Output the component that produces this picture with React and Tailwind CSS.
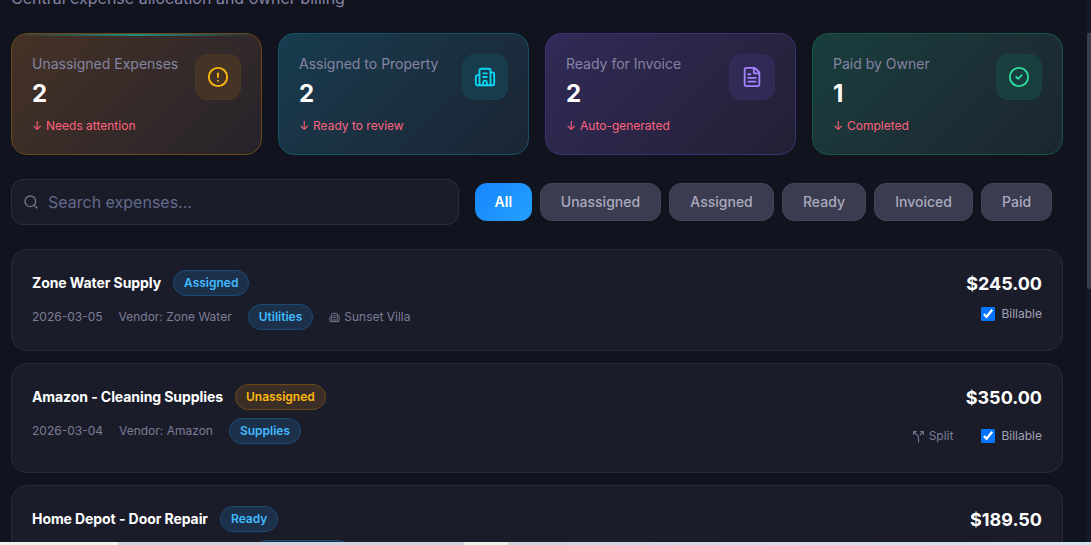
import { useState } from "react";
import { Building2, CircleAlert, CircleCheck, FileText, Search, Split } from "lucide-react";

const STATS = [
  {
    label: "Unassigned Expenses",
    value: 2,
    note: "Needs attention",
    icon: CircleAlert,
    card: "border-[#694819] from-[#453225] to-[#27232b]",
    box: "bg-[#453425] border-[#483727] text-[#ffb90c]",
    highlight: true,
  },
  {
    label: "Assigned to Property",
    value: 2,
    note: "Ready to review",
    icon: Building2,
    card: "border-[#155263] from-[#173c4f] to-[#1b2534]",
    box: "bg-[#173c4e] border-[#193f51] text-[#0dd6f3]",
  },
  {
    label: "Ready for Invoice",
    value: 2,
    note: "Auto-generated",
    icon: FileText,
    card: "border-[#3c3272] from-[#322a58] to-[#222034]",
    box: "bg-[#312a56] border-[#342d59] text-[#a684ff]",
  },
  {
    label: "Paid by Owner",
    value: 1,
    note: "Completed",
    icon: CircleCheck,
    card: "border-[#175646] from-[#193e3e] to-[#1c2530]",
    box: "bg-[#193e3e] border-[#1c4241] text-[#2fdc9b]",
  },
];

const FILTERS = ["All", "Unassigned", "Assigned", "Ready", "Invoiced", "Paid"];

const EXPENSES = [
  { id: 1, title: "Zone Water Supply", status: "Assigned", date: "2026-03-05", vendor: "Zone Water", category: "Utilities", property: "Sunset Villa", amount: "$245.00" },
  { id: 2, title: "Amazon - Cleaning Supplies", status: "Unassigned", date: "2026-03-04", vendor: "Amazon", category: "Supplies", amount: "$350.00", canSplit: true },
  { id: 3, title: "Home Depot - Door Repair", status: "Ready", date: "2026-03-03", vendor: "Home Depot", category: "Maintenance", property: "Ocean View", amount: "$189.50" },
];

function Badge({ children, warn }) {
  return (
    <span
      className={`flex h-[26px] items-center rounded-full border px-2.5 text-[12px] font-semibold ${
        warn ? "border-[#6b4918] bg-[#3b2e27] text-[#ffb90c]" : "border-[#1b4a75] bg-[#1c304a] text-[#41bbff]"
      }`}
    >
      {children}
    </span>
  );
}

function StatCard({ stat }) {
  const Icon = stat.icon;
  return (
    <div className={`relative flex h-[122px] justify-between overflow-hidden rounded-2xl border bg-linear-135 p-5 ${stat.card}`}>
      {stat.highlight && (
        <div className="absolute inset-x-0 top-0 h-0.5 bg-linear-to-r from-transparent via-[#21897c] to-transparent" />
      )}
      <div>
        <p className="text-[14px] leading-5 text-[#8584a3]">{stat.label}</p>
        <p className="mt-1 text-[24px] leading-8 font-bold text-white">{stat.value}</p>
        <p className="mt-2 flex gap-1 text-[12px] leading-4 text-[#ff637e]">
          <span>↓</span>
          <span>{stat.note}</span>
        </p>
      </div>
      <div className={`flex size-[46px] items-center justify-center rounded-xl border ${stat.box}`}>
        <Icon size={22} strokeWidth={2} />
      </div>
    </div>
  );
}

function ExpenseCard({ expense }) {
  return (
    <div className="flex items-start justify-between rounded-2xl border border-[#2a2b38] bg-[#1b1c2a] p-5">
      <div className={expense.canSplit ? "h-[68px]" : "h-[60px]"}>
        <div className="flex items-center gap-3">
          <h3 className="text-[14px] leading-5 font-bold tracking-[-0.08px] text-white">{expense.title}</h3>
          <Badge warn={expense.status === "Unassigned"}>{expense.status}</Badge>
        </div>
        <div className="mt-2 flex items-center gap-4 text-[12px] text-[#7b7c95]">
          <span>{expense.date}</span>
          <span>Vendor: {expense.vendor}</span>
          <Badge>{expense.category}</Badge>
          {expense.property && (
            <span className="flex items-center gap-1">
              <Building2 size={11} />
              {expense.property}
            </span>
          )}
        </div>
      </div>
      <div className="flex flex-col items-end">
        <p className="text-[18px] leading-[27px] font-bold text-white">{expense.amount}</p>
        <div className={`flex items-center text-[12px] ${expense.canSplit ? "mt-[17px]" : "mt-[9px]"}`}>
          {expense.canSplit && (
            <button className="mr-7 flex items-center gap-1 leading-4 text-[#7b7c95]">
              <Split size={13} />
              Split
            </button>
          )}
          <label className="flex items-center gap-1.5 leading-4 text-[#a0a0b6]">
            <input type="checkbox" defaultChecked className="size-3.5" />
            Billable
          </label>
        </div>
      </div>
    </div>
  );
}

export default function App() {
  const [active, setActive] = useState("All");

  return (
    <div className="flex h-[545px] w-full flex-col overflow-hidden bg-[#11131e] font-['Inter',sans-serif]">
      <div className="flex h-[542px] justify-between overflow-hidden">
        <main className="-mt-3.5 ml-[11px] w-[1052px]">
          <p className="h-[47px] text-[16px] leading-6 text-[#8584a3]">Central expense allocation and owner billing</p>

          <div className="grid grid-cols-4 gap-4">
            {STATS.map((stat) => (
              <StatCard key={stat.label} stat={stat} />
            ))}
          </div>

          <div className="mt-6 flex items-center gap-4">
            <div className="flex h-[46px] w-[448px] items-center gap-[9px] rounded-xl border border-[#2d2e3b] bg-[#1b1c2a] px-[11px]">
              <Search size={16} className="shrink-0 text-[#74758c]" />
              <input
                placeholder="Search expenses..."
                className="w-full bg-transparent text-[16px] text-white outline-none placeholder:text-[#636a8b]"
              />
            </div>
            <div className="flex gap-2">
              {FILTERS.map((name) => (
                <button
                  key={name}
                  onClick={() => setActive(name)}
                  className={`h-[38px] rounded-xl pb-px text-[14px] ${
                    active === name
                      ? "bg-linear-135 from-[#1784fb] to-[#25a1ff] px-[19.6px] font-semibold text-white"
                      : "border border-[#444557] bg-[#3b3c4f] px-[20.1px] font-medium text-[#aaaabf]"
                  }`}
                >
                  {name}
                </button>
              ))}
            </div>
          </div>

          <div className="mt-6 flex flex-col gap-3">
            {EXPENSES.map((expense) => (
              <ExpenseCard key={expense.id} expense={expense} />
            ))}
          </div>
        </main>

        {/* scrollbar */}
        <div className="w-1 bg-[#171925] pt-[33px]">
          <div className="h-64 rounded-b-sm bg-[#3b3c4d]" />
        </div>
      </div>

      {/* edge of the window below */}
      <div className="flex h-[3px] shrink-0">
        <div className="w-[118px] bg-[#f2f1ef]" />
        <div className="w-[346px] bg-[#d3d3df]" />
        <div className="w-[44px] bg-[#f0f0ec]" />
        <div className="flex-1 bg-linear-to-r from-[#d3d3df] to-[#d5e5f0]" />
      </div>
    </div>
  );
}
